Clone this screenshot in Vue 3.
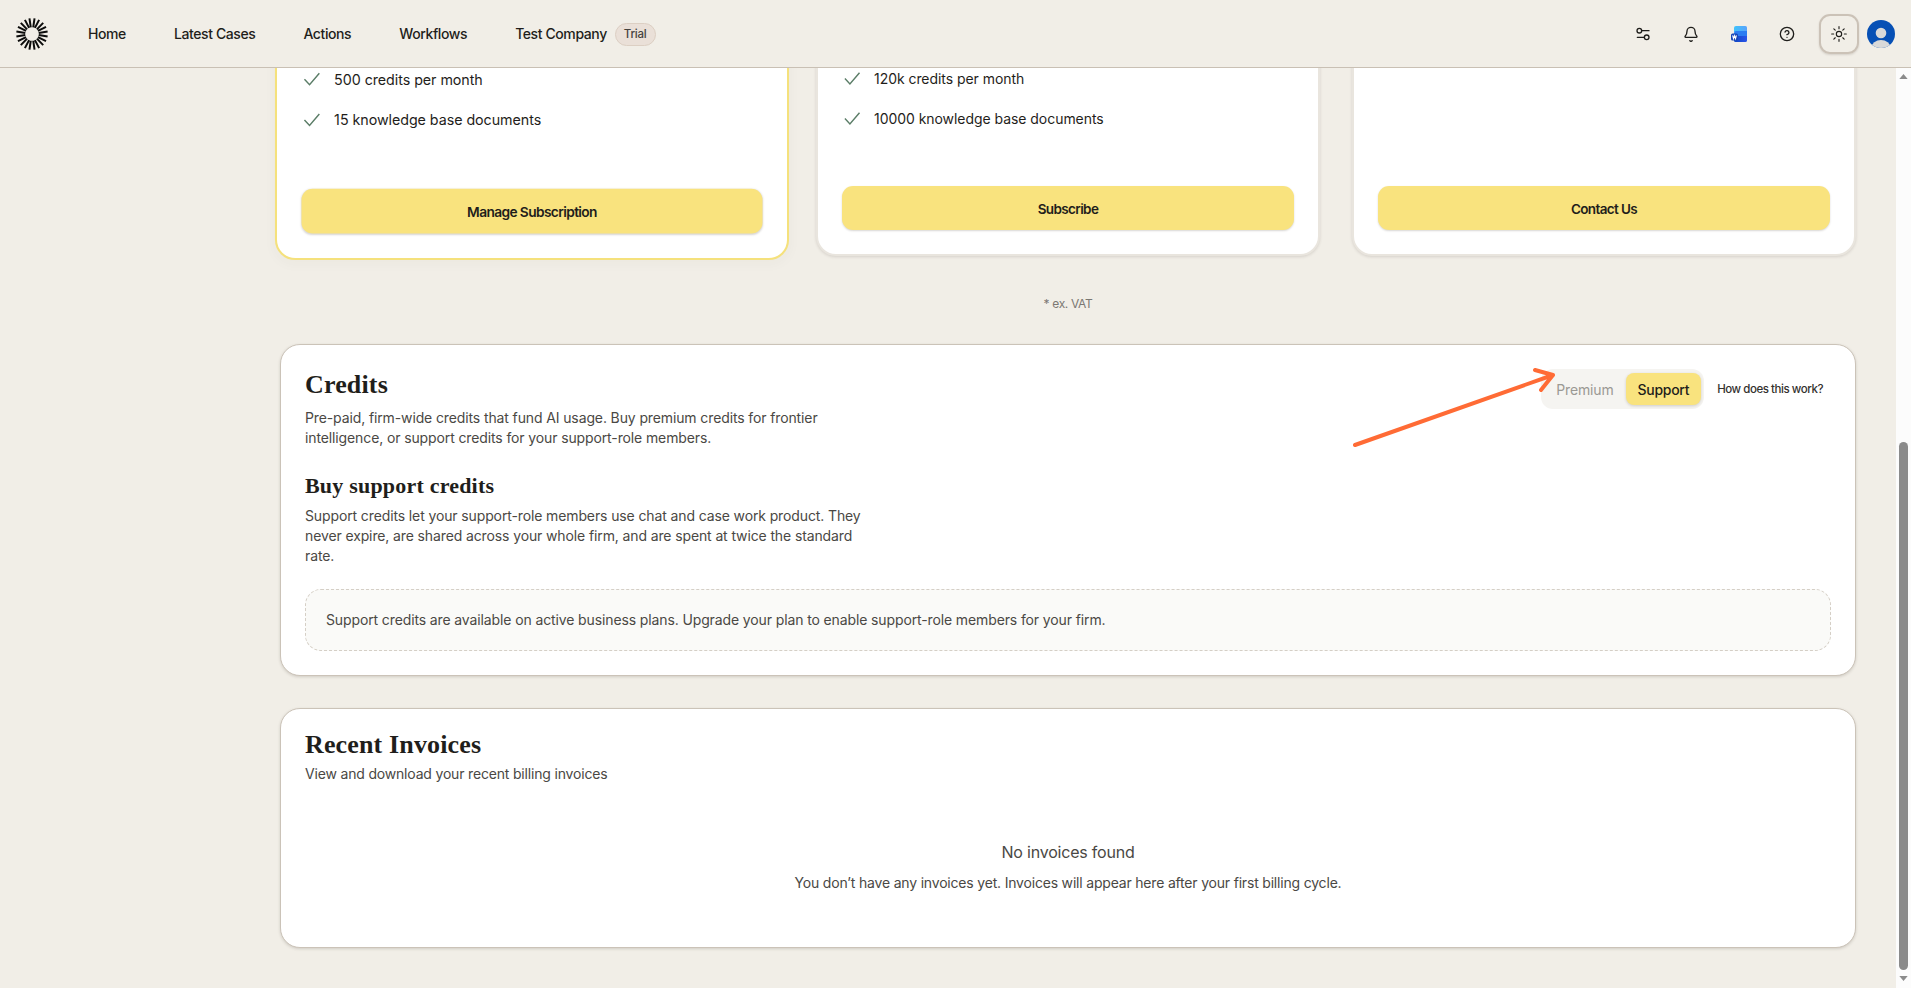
<script setup>
import { ref } from 'vue';

const navItems = ref(['Home', 'Latest Cases', 'Actions', 'Workflows']);
const rays = Array.from({ length: 10 }, (_, i) => i * 36 + 18);

const plans = ref([
  {
    features: ['500 credits per month', '15 knowledge base documents'],
    action: 'Manage Subscription',
    current: true
  },
  {
    features: ['120k credits per month', '10000 knowledge base documents'],
    action: 'Subscribe',
    current: false
  },
  { features: [], action: 'Contact Us', current: false }
]);

const creditType = ref('Support');
</script>

<template>
  <div class="app">
    <header class="topbar">
      <svg class="logo" viewBox="0 0 32 32">
        <path v-for="r in rays" :key="r" d="M15.100 9.300 13.600 0.400M16.900 9.300 18.400 0.400" :transform="`rotate(${r} 16 16)`" />
      </svg>
      <nav class="nav">
        <a v-for="item in navItems" :key="item">{{ item }}</a>
        <a class="company">Test Company <span class="badge">Trial</span></a>
      </nav>
      <div class="tools">
        <span class="tool">
          <svg class="icon" viewBox="0 0 24 24">
            <path d="M10.5 7H21M3.500 17h10" />
            <circle cx="6.500" cy="7" r="3.500" />
            <circle cx="17.500" cy="17" r="3.500" />
          </svg>
        </span>
        <span class="tool">
          <svg class="icon" viewBox="0 0 24 24">
            <path d="M10.3 22a1.94 1.94 0 0 0 3.4 0" />
            <path d="M3.26 15.33A1 1 0 0 0 4 17h16a1 1 0 0 0 .74-1.67C19.41 13.96 18 12.5 18 8A6 6 0 0 0 6 8c0 4.5-1.41 5.96-2.74 7.33" />
          </svg>
        </span>
        <span class="tool">
          <svg class="word" viewBox="0 0 16 16">
            <defs>
              <linearGradient id="word-top" x1="0" y1="0" x2="1" y2="0">
                <stop offset="0" stop-color="#3fc3fb" />
                <stop offset="1" stop-color="#5aa2fb" />
              </linearGradient>
              <linearGradient id="word-bottom" x1="0" y1="0" x2="1" y2="0">
                <stop offset="0" stop-color="#0f45c4" />
                <stop offset="1" stop-color="#2a55ea" />
              </linearGradient>
            </defs>
            <path d="M5 0h9.4A1.6 1.6 0 0 1 16 1.600V6H3V2a2 2 0 0 1 2-2z" fill="url(#word-top)" />
            <path d="M3 7a2 2 0 0 1 2-2h11v6H3z" fill="#2b7cf2" />
            <path d="M3 11.500a1.500 1.500 0 0 1 1.500-1.500H16v4.400a1.600 1.600 0 0 1-1.600 1.600H4.600A1.600 1.600 0 0 1 3 14.400z" fill="url(#word-bottom)" />
            <rect x="0" y="7.500" width="7" height="7" rx="1.500" fill="#1746b8" />
            <path d="M1.600 9.300l.9 3.400 1-3 1 3 .9-3.400" fill="none" stroke="#fff" stroke-width="1.100" />
          </svg>
        </span>
        <span class="tool">
          <svg class="icon" viewBox="0 0 24 24">
            <circle cx="12" cy="12" r="10" />
            <path d="M9.090 9a3 3 0 0 1 5.830 1c0 2-3 3-3 3M12 17h.01" />
          </svg>
        </span>
        <button class="theme">
          <svg class="icon" viewBox="0 0 24 24">
            <circle cx="12" cy="12" r="4" />
            <path d="M12 1v3M12 20v3M4.230 4.230l2.100 2.100M17.660 17.660l2.100 2.100M1 12h3M20 12h3M6.340 17.660l-2.100 2.100M19.770 4.230l-2.100 2.100" />
          </svg>
        </button>
        <svg class="avatar" viewBox="0 0 28 28">
          <clipPath id="avatar-clip"><circle cx="14" cy="14" r="14" /></clipPath>
          <g clip-path="url(#avatar-clip)">
            <rect width="28" height="28" fill="#0750b5" />
            <circle cx="14" cy="13" r="5.300" fill="#d9d9d9" />
            <ellipse cx="14" cy="27.500" rx="9.500" ry="7.500" fill="#d9d9d9" />
          </g>
        </svg>
      </div>
    </header>

    <div class="body">
      <main class="content">
        <section class="plans">
          <article v-for="plan in plans" :key="plan.action" class="plan" :class="{ current: plan.current }">
            <ul>
              <li v-for="feature in plan.features" :key="feature">
                <svg viewBox="0 0 24 24"><path d="M21 4.500 9.500 18 3.500 11.500" /></svg>
                {{ feature }}
              </li>
            </ul>
            <button class="plan-button">{{ plan.action }}</button>
          </article>
        </section>
        <p class="vat">* ex. VAT</p>

        <section class="card credits">
          <div class="credits-head">
            <div>
              <h2>Credits</h2>
              <p class="intro">
                Pre-paid, firm-wide credits that fund AI usage. Buy premium credits for frontier
                intelligence, or support credits for your support-role members.
              </p>
            </div>
            <div class="controls">
              <div class="toggle">
                <button :class="{ active: creditType === 'Premium' }" @click="creditType = 'Premium'">Premium</button>
                <button :class="{ active: creditType === 'Support' }" @click="creditType = 'Support'">Support</button>
              </div>
              <a class="how">How does this work?</a>
            </div>
          </div>
          <h3>Buy support credits</h3>
          <p class="details">
            Support credits let your support-role members use chat and case work product. They
            never expire, are shared across your whole firm, and are spent at twice the standard
            rate.
          </p>
          <div class="notice">
            <span>Support credits are available on active business plans. Upgrade your plan to enable support-role members for your firm.</span>
          </div>
          <svg class="arrow" viewBox="0 0 208 84">
            <path d="M4 79 202 9M184 4l18 5-12 15" />
          </svg>
        </section>

        <section class="card invoices">
          <h2>Recent Invoices</h2>
          <p class="subtitle">View and download your recent billing invoices</p>
          <div class="empty">
            <p class="empty-title">No invoices found</p>
            <p class="empty-text">You don’t have any invoices yet. Invoices will appear here after your first billing cycle.</p>
          </div>
        </section>
      </main>

      <div class="scrollbar">
        <svg viewBox="0 0 10 6"><path d="M5 0 10 6H0z" /></svg>
        <div class="thumb"></div>
        <svg viewBox="0 0 10 6"><path d="M0 0h10L5 6z" /></svg>
      </div>
    </div>
  </div>
</template>

<style>
body {
  margin: 0;
  overflow: hidden;
}
</style>

<style scoped>
.app {
  height: 988px;
  display: flex;
  flex-direction: column;
  overflow: hidden;
  background: #f1eee7;
  color: #1f1e1b;
  font-family: Inter, "Liberation Sans", sans-serif;
  font-size: 14px;
  line-height: 20px;
}

p, h2, h3, ul {
  margin: 0;
  padding: 0;
}

button {
  border: 0;
  padding: 0;
  background: none;
  font: inherit;
  color: inherit;
}

.topbar {
  position: relative;
  z-index: 2;
  display: flex;
  align-items: center;
  box-sizing: border-box;
  flex: none;
  height: 68px;
  padding: 0 16px;
  background: #f1eee7;
  border-bottom: 1px solid #c9c0b4;
}

.logo {
  width: 32px;
  height: 32px;
}

.logo path {
  stroke: #0c0c0b;
  stroke-width: 2;
}

.nav {
  display: flex;
  align-items: center;
  gap: 48px;
  margin-left: 40px;
  padding-top: 1px;
  font-weight: 500;
  letter-spacing: -0.4px;
}

.company {
  display: flex;
  align-items: center;
  gap: 8px;
}

.badge {
  box-sizing: border-box;
  height: 23px;
  padding: 0 8px;
  border: 1px solid #dccfc3;
  border-radius: 12px;
  background: #eae0d8;
  color: #45423e;
  font-size: 11.5px;
  line-height: 21px;
  letter-spacing: -0.2px;
}

.tools {
  display: flex;
  align-items: center;
  margin-left: auto;
}

.tool {
  display: flex;
  justify-content: center;
  width: 48px;
}

.icon {
  width: 16px;
  height: 16px;
  fill: none;
  stroke: #1f1e1b;
  stroke-width: 2;
  stroke-linecap: round;
  stroke-linejoin: round;
}

.word {
  width: 16px;
  height: 16px;
}

.theme {
  display: flex;
  align-items: center;
  justify-content: center;
  box-sizing: border-box;
  width: 40px;
  height: 40px;
  margin: 0 8px;
  border: 2px solid #cbc2b7;
  border-radius: 11px;
  box-shadow: 0 1px 2px rgba(60, 50, 40, 0.15);
}

.theme .icon {
  stroke-width: 1.7;
}

.avatar {
  width: 28px;
  height: 28px;
}

.body {
  display: flex;
  flex: 1;
  min-height: 0;
}

.content {
  flex: 1;
  padding: 0 40px 0 280px;
}

.plans {
  display: flex;
  align-items: flex-end;
  gap: 32px;
  height: 188px;
}

.plan {
  display: flex;
  flex-direction: column;
  justify-content: flex-end;
  box-sizing: border-box;
  flex: 1;
  height: 412px;
  padding: 24px;
  border: 2px solid #e9e5de;
  border-radius: 20px;
  background: #fff;
  box-shadow: 0 1px 3px rgba(60, 50, 40, 0.15);
}

.plan.current {
  border-color: #f5e17c;
  transform: scale(1.02);
  box-shadow: 0 3px 12px rgba(60, 50, 40, 0.03);
}

.plan ul {
  display: flex;
  flex-direction: column;
  gap: 20px;
  margin-bottom: 57px;
  list-style: none;
  letter-spacing: -0.05px;
}

.plan li {
  display: flex;
  gap: 12px;
}

.plan li svg {
  width: 20px;
  height: 20px;
  fill: none;
  stroke: #5b7d67;
  stroke-width: 1.7;
}

.plan-button {
  height: 44px;
  padding-top: 1px;
  border-radius: 11px;
  background: #f9e37e;
  box-shadow: 0 1px 2px rgba(60, 50, 40, 0.2);
  font-size: 13.5px;
  font-weight: 600;
  letter-spacing: -0.62px;
}

.vat {
  margin: 38px 0 30px;
  color: #7b7873;
  font-size: 12px;
  letter-spacing: -0.35px;
  text-align: center;
}

.card {
  position: relative;
  box-sizing: border-box;
  padding: 24px;
  border: 1px solid #cbc3b8;
  border-radius: 20px;
  background: #fff;
  box-shadow: 0 1px 3px rgba(60, 50, 40, 0.18);
  color: #4a4844;
  letter-spacing: -0.12px;
}

h2, h3 {
  color: #1f1e1b;
  font-family: "Liberation Serif", serif;
  font-weight: 700;
}

h2 {
  font-size: 26px;
  line-height: 32px;
  letter-spacing: 0.15px;
}

h3 {
  font-size: 22px;
  line-height: 28px;
  letter-spacing: 0.2px;
}

.credits {
  height: 332px;
}

.credits-head {
  display: flex;
  justify-content: space-between;
}

.intro {
  width: 530px;
  margin-top: 7px;
}

.controls {
  display: flex;
  align-items: center;
  height: 40px;
  padding-right: 8px;
}

.toggle {
  display: flex;
  box-sizing: border-box;
  height: 40px;
  padding: 4px 3px;
  border-radius: 12px;
  background: #f5f4f1;
}

.toggle button {
  padding: 1px 12px 0;
  border-radius: 8px;
  color: #9b9994;
  letter-spacing: -0.15px;
}

.toggle .active {
  background: #f9e37e;
  box-shadow: 0 1px 3px rgba(60, 50, 40, 0.2);
  color: #1f1e1b;
  font-weight: 500;
  letter-spacing: -0.3px;
}

.how {
  margin-left: 13px;
  color: #33312e;
  font-size: 11.5px;
  font-weight: 500;
  letter-spacing: -0.45px;
}

.credits h3 {
  margin-top: 24px;
}

.details {
  width: 568px;
  margin-top: 6px;
}

.notice {
  display: flex;
  align-items: center;
  box-sizing: border-box;
  height: 62px;
  margin-top: 23px;
  padding: 0 20px;
  border: 1px dashed #d5cfc6;
  border-radius: 16px;
  background: #fafaf8;
}

/* annotation drawn over the card */
.arrow {
  position: absolute;
  left: 1070px;
  top: 21px;
  width: 208px;
  height: 84px;
  fill: none;
  stroke: #ff6b35;
  stroke-width: 4;
  stroke-linecap: round;
  stroke-linejoin: round;
}

.invoices {
  height: 240px;
  margin-top: 32px;
}

.invoices h2 {
  margin-top: -4px;
}

.subtitle {
  margin-top: 3px;
  letter-spacing: -0.18px;
}

.empty {
  display: flex;
  flex-direction: column;
  align-items: center;
  gap: 9px;
  margin-top: 56px;
}

.empty-title {
  font-size: 16px;
  line-height: 24px;
  letter-spacing: -0.2px;
}

.empty-text {
  letter-spacing: -0.19px;
}

.scrollbar {
  display: flex;
  flex-direction: column;
  align-items: center;
  box-sizing: border-box;
  width: 15px;
  padding: 6px 0 7px;
  background: #fcfcfc;
}

.scrollbar svg {
  width: 9px;
  height: 5px;
  fill: #8b8b8b;
}

.thumb {
  width: 9px;
  height: 528px;
  margin: auto 0 6px;
  border-radius: 5px;
  background: #8b8b8b;
}
</style>
